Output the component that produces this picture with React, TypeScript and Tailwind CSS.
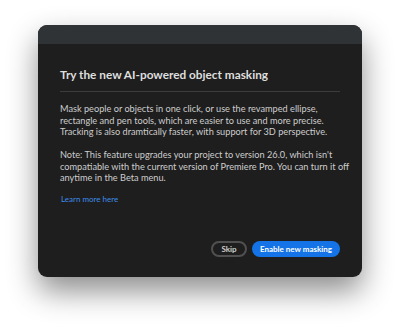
import React from 'react';

export default function App() {
  return (
    <div className="w-[400px] h-[329px] bg-white pt-[25px] pl-[38px] font-['Lato',sans-serif]">
      <div className="w-[324px] h-[252px] rounded-[9px] bg-[#1e1e1e] overflow-hidden flex flex-col shadow-[0_14px_30px_rgba(0,0,0,0.45)]">
        <div className="h-[19px] bg-[#303336] shrink-0" />
        <div className="flex flex-col flex-1 px-[22px] pt-[23px] pb-[20px]">
          <h1 className="text-[11.8px] leading-[16px] font-bold text-[#dedede]">
            Try the new AI-powered object masking
          </h1>
          <div className="h-px bg-[#3c3c3c] mt-[8px]" />
          <div className="whitespace-nowrap text-[9.2px] leading-[11.5px] text-[#cdcdcd]">
            <p className="mt-[11px]">
              Mask people or objects in one click, or use the revamped ellipse,
              <br />
              rectangle and pen tools, which are easier to use and more precise.
              <br />
              Tracking is also dramtically faster, with support for 3D perspective.
            </p>
            <p className="mt-[11.5px]">
              Note: This feature upgrades your project to version 26.0, which isn't
              <br />
              compatiable with the current version of Premiere Pro. You can turn it off
              <br />
              anytime in the Beta menu.
            </p>
          </div>
          <a className="mt-[9px] ml-[1px] text-[8px] leading-[12px] text-[#3d8ce8] self-start">
            Learn more here
          </a>
          <div className="mt-auto flex justify-end gap-[5px]">
            <button className="h-[16px] w-[36px] rounded-full border-2 border-[#505050] text-[8px] font-bold text-[#cfcfcf] flex items-center justify-center">
              Skip
            </button>
            <button className="h-[16px] w-[88px] rounded-full bg-[#1473e6] text-[8px] font-bold text-white flex items-center justify-center">
              Enable new masking
            </button>
          </div>
        </div>
      </div>
    </div>
  );
}
